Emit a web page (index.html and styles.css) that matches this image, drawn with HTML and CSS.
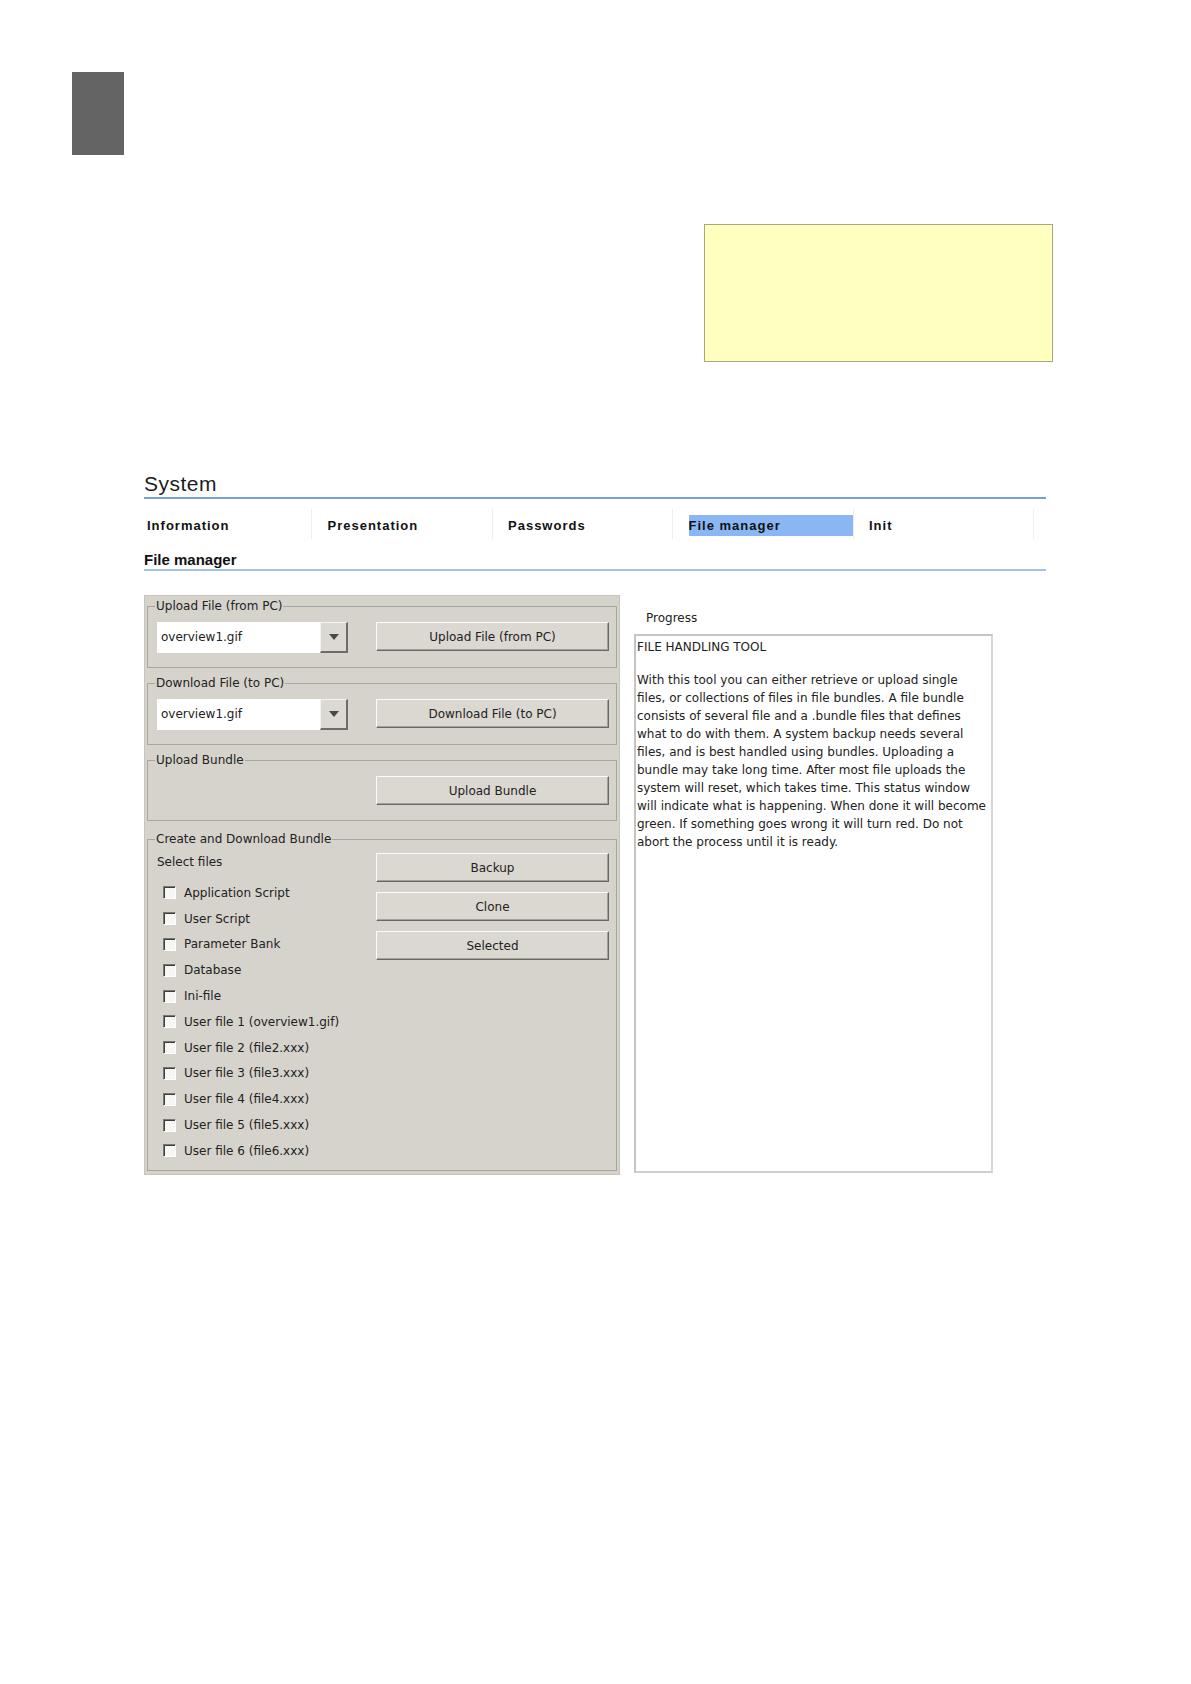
FILE: index.html
```html
<!DOCTYPE html>
<html lang="en">
<head>
<meta charset="utf-8">
<title>System - File manager</title>
<link rel="stylesheet" href="styles.css">
</head>
<body>
<div class="page">
  <div class="marker"></div>
  <div class="note"></div>

  <section class="system">
    <h1 class="sys-title">System</h1>

    <nav class="tabs">
      <div class="tab"><span class="tab-text">Information</span></div>
      <div class="tab"><span class="tab-text">Presentation</span></div>
      <div class="tab"><span class="tab-text">Passwords</span></div>
      <div class="tab is-active"><span class="tab-text">File manager</span></div>
      <div class="tab"><span class="tab-text">Init</span></div>
    </nav>

    <h2 class="sub-title">File manager</h2>

    <div class="content">
      <div class="panel">
        <fieldset class="group">
          <legend class="group-legend">Upload File (from PC)</legend>
          <div class="group-row">
            <div class="combo">
              <span class="combo-value">overview1.gif</span>
              <span class="combo-btn"><svg class="combo-arrow" viewBox="0 0 10 6" width="10" height="6"><polygon points="0,0 10,0 5,6" fill="#4a4a4a"/></svg></span>
            </div>
            <button class="btn">Upload File (from PC)</button>
          </div>
        </fieldset>

        <fieldset class="group">
          <legend class="group-legend">Download File (to PC)</legend>
          <div class="group-row">
            <div class="combo">
              <span class="combo-value">overview1.gif</span>
              <span class="combo-btn"><svg class="combo-arrow" viewBox="0 0 10 6" width="10" height="6"><polygon points="0,0 10,0 5,6" fill="#4a4a4a"/></svg></span>
            </div>
            <button class="btn">Download File (to PC)</button>
          </div>
        </fieldset>

        <fieldset class="group group--bundle">
          <legend class="group-legend">Upload Bundle</legend>
          <div class="group-row">
            <div class="spacer"></div>
            <button class="btn">Upload Bundle</button>
          </div>
        </fieldset>

        <fieldset class="group group--create">
          <legend class="group-legend">Create and Download Bundle</legend>
          <div class="group-row">
            <div class="file-list">
              <div class="select-title">Select files</div>
              <label class="check"><span class="check-box"></span>Application Script</label>
              <label class="check"><span class="check-box"></span>User Script</label>
              <label class="check"><span class="check-box"></span>Parameter Bank</label>
              <label class="check"><span class="check-box"></span>Database</label>
              <label class="check"><span class="check-box"></span>Ini-file</label>
              <label class="check"><span class="check-box"></span>User file 1 (overview1.gif)</label>
              <label class="check"><span class="check-box"></span>User file 2 (file2.xxx)</label>
              <label class="check"><span class="check-box"></span>User file 3 (file3.xxx)</label>
              <label class="check"><span class="check-box"></span>User file 4 (file4.xxx)</label>
              <label class="check"><span class="check-box"></span>User file 5 (file5.xxx)</label>
              <label class="check"><span class="check-box"></span>User file 6 (file6.xxx)</label>
            </div>
            <div class="btn-stack">
              <button class="btn">Backup</button>
              <button class="btn">Clone</button>
              <button class="btn">Selected</button>
            </div>
          </div>
        </fieldset>
      </div>

      <div class="progress">
        <div class="progress-label">Progress</div>
        <div class="progress-box">
          <p class="progress-title">FILE HANDLING TOOL</p>
          <p class="progress-text">With this tool you can either retrieve or upload single<br>files, or collections of files in file bundles. A file bundle<br>consists of several file and a .bundle files that defines<br>what to do with them. A system backup needs several<br>files, and is best handled using bundles. Uploading a<br>bundle may take long time. After most file uploads the<br>system will reset, which takes time. This status window<br>will indicate what is happening. When done it will become<br>green. If something goes wrong it will turn red. Do not<br>abort the process until it is ready.</p>
        </div>
      </div>
    </div>
  </section>
</div>
</body>
</html>
```

FILE: styles.css
```css
body {
  margin: 0;
  background: #ffffff;
  font-family: "DejaVu Sans", Verdana, sans-serif;
  font-size: 12px;
  color: #222222;
}

.page {
  padding-top: 72px;
  padding-bottom: 40px;
}

.marker {
  margin-left: 72px;
  width: 52px;
  height: 83px;
  background: #646464;
}

.note {
  margin: 69px 0 0 704px;
  width: 347px;
  height: 136px;
  background: #ffffc0;
  border: 1px solid #a7a97a;
}

.system {
  margin: 110px 0 0 144px;
  width: 902px;
}

.sys-title {
  margin: 0;
  font-family: "Liberation Sans", Arial, sans-serif;
  font-weight: 400;
  font-size: 21px;
  line-height: 24px;
  letter-spacing: 0.5px;
  color: #1c1c1c;
  padding-bottom: 1px;
  border-bottom: 2px solid #72a0d9;
}

.tabs {
  display: flex;
  margin: 10px 0 0 3px;
}

.tab {
  flex: none;
  width: 164px;
  height: 24px;
  padding-top: 6px;
  margin-right: 15.5px;
  border-right: 1px solid #efefef;
}

.tab-text {
  display: block;
  height: 21px;
  line-height: 21px;
  font-family: "Liberation Sans", Arial, sans-serif;
  font-weight: 700;
  font-size: 13px;
  letter-spacing: 1px;
  color: #111111;
}

.tab.is-active .tab-text {
  background: #8ab7f4;
}

.sub-title {
  margin: 12px 0 0;
  font-family: "Liberation Sans", Arial, sans-serif;
  font-weight: 700;
  font-size: 15px;
  line-height: 18px;
  color: #111111;
  border-bottom: 2px solid #a3c1ea;
}

.content {
  display: flex;
  align-items: flex-start;
  margin-top: 24px;
}

.panel {
  flex: none;
  width: 476px;
  box-sizing: border-box;
  background: #d6d3cd;
  border: 1px solid #c7c4be;
  padding: 3px 2px 3px 2px;
}

.group {
  margin: 0;
  min-width: 0;
  padding: 8px 7px 14px 9px;
  border: 1px solid #a9a69f;
}

.group + .group {
  margin-top: 8px;
}

.group--bundle {
  padding-bottom: 15px;
}

.group--create {
  padding-top: 6px;
  padding-bottom: 6px;
}

.group + .group--create {
  margin-top: 11px;
}

.group-legend {
  padding: 0 1px;
  margin-left: -2px;
  line-height: 15px;
  color: #222222;
}

.group-row {
  display: flex;
  align-items: flex-start;
  gap: 28px;
}

.spacer {
  width: 191px;
  flex: none;
}

.combo {
  flex: none;
  display: flex;
  width: 191px;
  height: 31px;
  background: #ffffff;
  box-sizing: border-box;
}

.combo-value {
  flex: 1;
  padding-left: 4px;
  line-height: 31px;
  color: #222222;
}

.combo-btn {
  flex: none;
  width: 28px;
  box-sizing: border-box;
  display: flex;
  align-items: center;
  justify-content: center;
  background: #dcd9d3;
  border-left: 1px solid #f4f3f0;
  border-top: 1px solid #f4f3f0;
  border-right: 2px solid #6e6c68;
  border-bottom: 2px solid #6e6c68;
}

.btn {
  flex: none;
  display: block;
  width: 233px;
  height: 29px;
  padding: 0;
  margin: 0;
  font-family: inherit;
  font-size: 12px;
  color: #222222;
  background: #dbd8d2;
  border: 1px solid;
  border-color: #fbfbfa #6a6864 #6a6864 #fbfbfa;
  box-shadow: inset -1px -1px 0 #a4a19b;
}

.btn-stack {
  display: flex;
  flex-direction: column;
  gap: 10px;
}

.file-list {
  flex: none;
  width: 191px;
}

.select-title {
  line-height: 18px;
  margin-bottom: 9px;
}

.check {
  display: flex;
  align-items: center;
  height: 25.8px;
  padding-left: 6px;
  white-space: nowrap;
}

.check-box {
  flex: none;
  width: 13px;
  height: 13px;
  box-sizing: border-box;
  margin-right: 8px;
  background: #f6f6f4;
  border: 1px solid;
  border-color: #7a7875 #ffffff #ffffff #7a7875;
  box-shadow: inset 1px 1px 0 #3e3e3e;
}

.progress {
  flex: none;
  margin-left: 14px;
  width: 359px;
  padding-top: 14px;
}

.progress-label {
  padding-left: 12px;
  line-height: 18px;
}

.progress-box {
  margin-top: 7px;
  height: 539px;
  box-sizing: border-box;
  background: #ffffff;
  border: 2px solid;
  border-color: #c4c4c4 #d6d6d6 #d0d0d0 #c4c4c4;
  padding: 1.5px 0 0 1px;
}

.progress-title {
  margin: 0;
  line-height: 18px;
  white-space: nowrap;
}

.progress-text {
  margin: 15.5px 0 0;
  line-height: 18px;
  white-space: nowrap;
}
```
